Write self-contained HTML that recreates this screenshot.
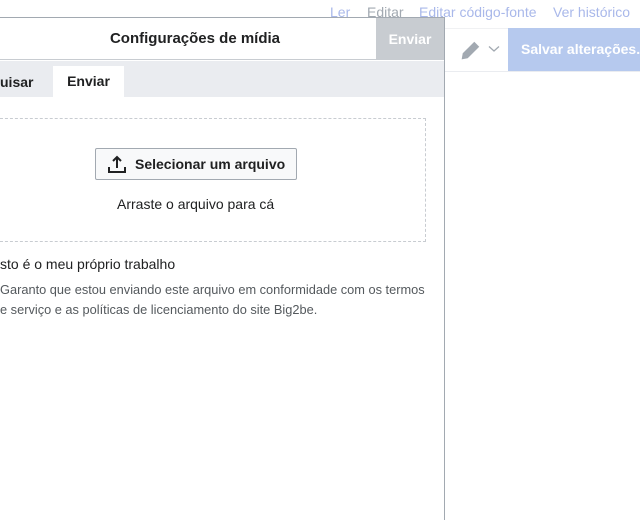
<!DOCTYPE html>
<html style="width:640px;height:520px;overflow:hidden"><head><style>
*{margin:0;padding:0;box-sizing:border-box}
body{width:640px;height:520px;overflow:hidden;background:#fff;font-family:"Liberation Sans",Arial,sans-serif;position:relative}
.a{position:absolute}
.top{top:4px;font-size:14px;color:#a9b8ea}
</style></head><body>
<div class="a top" style="left:330px">Ler</div>
<div class="a top" style="left:367px;color:#a2a9b1">Editar</div>
<div class="a top" style="left:419px">Editar código-fonte</div>
<div class="a top" style="left:553px">Ver histórico</div>
<div class="a" style="left:445px;top:28px;width:195px;height:44px;border-top:1px solid #f0f1f3;border-bottom:1px solid #eaecf0"></div>
<svg class="a" style="left:460px;top:39px" width="22" height="22" viewBox="0 0 20 20"><path d="M1.5 18.5 L2.5 13 L13 2.5 L17.5 7 L7 17.5 Z" fill="#a2a9b1"/></svg>
<svg class="a" style="left:488px;top:45px" width="12" height="8" viewBox="0 0 12 8"><path d="M1 1.5 L6 6 L11 1.5" fill="none" stroke="#a2a9b1" stroke-width="1.3"/></svg>
<div class="a" style="left:508px;top:28px;width:132px;height:43px;background:#b6c9ee;color:#fff;font-weight:bold;font-size:14px;line-height:43px;padding-left:13px;white-space:nowrap;overflow:hidden">Salvar alterações...</div>
<div class="a" style="left:-2px;top:17px;width:447px;height:503px;background:#fff;border:1px solid #a2a9b1;border-left:none;border-bottom:none"></div>
<div class="a" style="left:0;top:18px;width:444px;height:42px;border-bottom:1px solid #c8ccd1"></div>
<div class="a" style="left:0;top:30px;width:390px;text-align:center;font-weight:bold;font-size:15px;color:#202122">Configurações de mídia</div>
<div class="a" style="left:376px;top:18px;width:68px;height:42px;background:#c8ccd1;color:#fff;font-weight:bold;font-size:14px;text-align:center;line-height:42px">Enviar</div>
<div class="a" style="left:0;top:61px;width:444px;height:36px;background:#eaecf0"></div>
<div class="a" style="left:0;top:74px;font-weight:bold;font-size:14px;color:#202122">uisar</div>
<div class="a" style="left:53px;top:66px;width:71px;height:31px;background:#fff;font-weight:bold;font-size:14px;color:#202122;text-align:center;line-height:31px">Enviar</div>
<div class="a" style="left:-5px;top:118px;width:431px;height:124px;border:1px dashed #c8ccd1"></div>
<div class="a" style="left:95px;top:148px;width:202px;height:32px;background:#f8f9fa;border:1px solid #a2a9b1;border-radius:2px"></div>
<svg class="a" style="left:107px;top:154px" width="20" height="20" viewBox="0 0 20 20"><path d="M10 14 V3 M6 7 L10 3 L14 7" fill="none" stroke="#202122" stroke-width="2"/><path d="M2 13 V18 H18 V13" fill="none" stroke="#202122" stroke-width="2"/></svg>
<div class="a" style="left:135px;top:156px;font-weight:bold;font-size:14px;color:#202122">Selecionar um arquivo</div>
<div class="a" style="left:117px;top:196px;font-size:14px;color:#202122">Arraste o arquivo para cá</div>
<div class="a" style="left:0;top:256px;font-size:14px;color:#202122">sto é o meu próprio trabalho</div>
<div class="a" style="left:0;top:280px;font-size:12.8px;line-height:20px;color:#54595d;white-space:nowrap">Garanto que estou enviando este arquivo em conformidade com os termos<br>e serviço e as políticas de licenciamento do site Big2be.</div>
</body></html>
